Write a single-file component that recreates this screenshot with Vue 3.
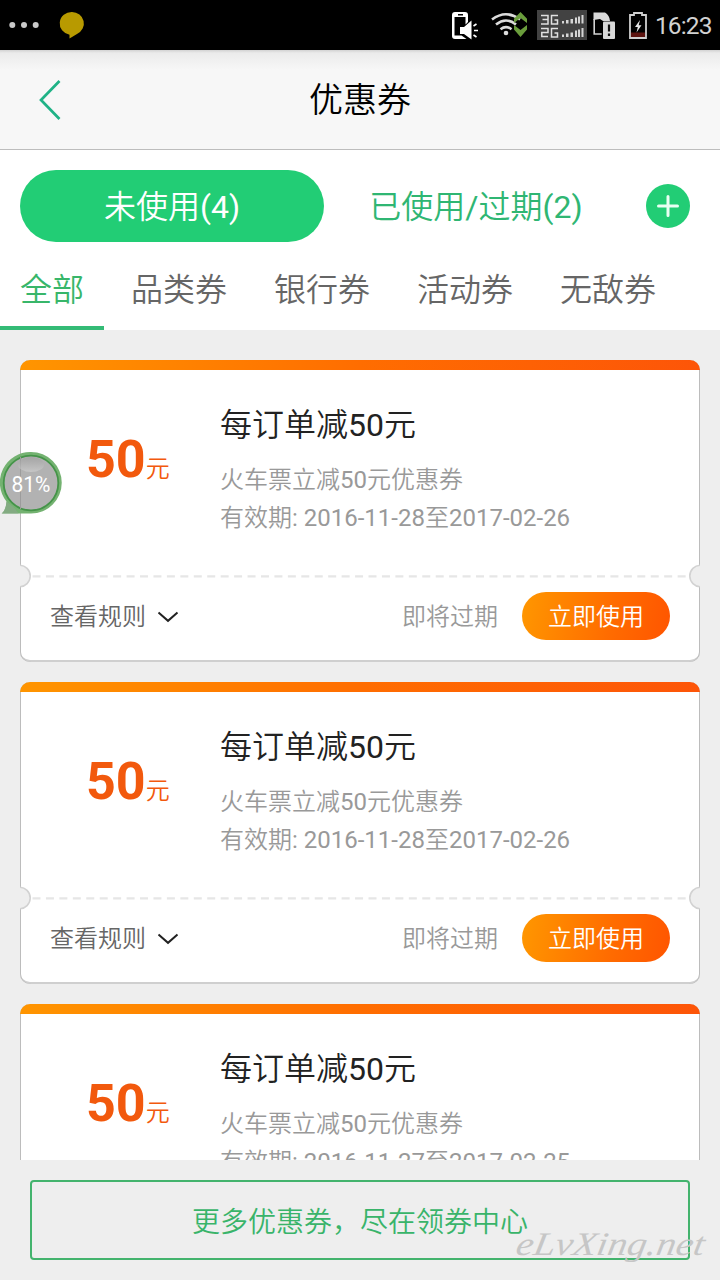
<script setup>
const filters = ['全部', '品类券', '银行券', '活动券', '无敌券']

const coupons = [
  { amount: 50, title: '每订单减50元', desc: '火车票立减50元优惠券', valid: '有效期: 2016-11-28至2017-02-26', note: '即将过期' },
  { amount: 50, title: '每订单减50元', desc: '火车票立减50元优惠券', valid: '有效期: 2016-11-28至2017-02-26', note: '即将过期' },
  { amount: 50, title: '每订单减50元', desc: '火车票立减50元优惠券', valid: '有效期: 2016-11-27至2017-02-25', note: '即将过期' }
]

// Splits a label so that Latin runs can carry their own weight.
const runs = (s) => s.split(/([\x20-\x7e]+)/).filter(Boolean).map((t) => ({ t, latin: /^[\x20-\x7e]/.test(t) }))
</script>

<template>
  <div class="screen">
    <div class="status">
      <svg class="status-left" width="90" height="50" viewBox="0 0 90 50">
        <g fill="#c9c9c9">
          <circle cx="12.3" cy="25" r="3" /><circle cx="24" cy="25" r="3" /><circle cx="35.7" cy="25" r="3" />
        </g>
        <path fill="#b89a00" d="M72 12a12 11.5 0 0 1 5 21.900l-7.500 4.600v-3.700A12 11.500 0 0 1 72 12z" />
      </svg>
      <svg class="status-icons" width="212" height="50" viewBox="440 0 212 50">
        <path fill="#fff" fill-rule="evenodd" d="M455 12h10a3 3 0 0 1 3 3v7l-2.500 2.500V17h-11v18.500h7l5 3.500H455a3 3 0 0 1-3-3V15a3 3 0 0 1 3-3zm3 2v1.500h5V14z" />
        <path fill="#fff" d="M460 27h4l7.500-6.500v19L464 34h-4z" />
        <path d="M473.500 26l3-2M474 30.500h4M473.500 35l3 2" stroke="#fff" stroke-width="1.700" fill="none" />
        <g fill="none" stroke="#dcdcdc" stroke-width="2.600">
          <path d="M492 19.500Q506 9 520 19.500" /><path d="M496 24.500Q506 16.500 516 24.500" /><path d="M500.500 29.200Q506 25 511.500 29.200" />
        </g>
        <circle cx="506" cy="33" r="2.300" fill="#dcdcdc" />
        <path fill="#6a9d3c" d="M520.500 12l6.500 6.700v4.300l-6.500-5-6.500 5v-4.300zM514 25l6.500 5 6.500-5v4.500l-6.500 7.500-6.500-7.500z" />
        <rect x="537" y="10" width="50" height="30" fill="#424242" />
        <g fill="none" stroke="#e0e0e0" stroke-width="1.500">
          <path d="M541 15.500h7v8.500h-7M542.500 19.500h5.500M558 15.500h-6.500V24h6v-4h-3" />
          <path d="M541 28.500h7v4h-6.200v4H548M558 28.500h-6.500V37h6v-4h-3" />
        </g>
        <g fill="#d5d5d5">
          <path d="M562 21h2v2.500h-2zM566 20h2.500v3.500H566zM570.500 19h2.500v4.500h-2.500zM575 17.500h2v6h-2zM578 16.500h2v7h-2zM581.500 15h2v8.500h-2z" />
          <path d="M562 34.500h2V37h-2zM566 33.500h2.500V37H566zM570.500 32.500h2.500V37h-2.500zM575 30.500h2V37h-2zM578 29.500h2V37h-2zM581.500 28h2v9h-2z" />
        </g>
        <path d="M594.200 19v15h7.500" fill="none" stroke="#d2d2d2" stroke-width="1.600" />
        <path d="M593.500 12.500h11.500q4.500 2.500 5 8.500H603l-3-2-6.500 1z" fill="#d8d8d8" />
        <rect x="603" y="21.500" width="12" height="17.500" rx="1" fill="#d8d8d8" />
        <path d="M609 24.500v7M609 33.500v2.500" stroke="#111" stroke-width="2.200" />
        <path d="M630 15h4v-2h8v2h4v23h-16z" fill="none" stroke="#d0d0d0" stroke-width="1.800" />
        <rect x="631" y="32.500" width="14" height="4.500" fill="#5d1410" />
        <path d="M640 20l-5 7h2.800l-1.300 5.500 5-7.300h-2.800z" fill="#e8e8e8" />
      </svg>
      <span class="clock">16:23</span>
    </div>

    <header class="header">
      <svg class="back" width="24" height="42" viewBox="0 0 24 42">
        <path d="M21.500 2L3 21l18.500 19" fill="none" stroke="#1fb286" stroke-width="2.700" />
      </svg>
      <h1>优惠券</h1>
    </header>

    <section class="tabs">
      <div class="states">
        <div class="state on"><span v-for="(r, k) in runs('未使用(4)')" :key="k" :class="{ latin: r.latin }">{{ r.t }}</span></div>
        <div class="state"><span v-for="(r, k) in runs('已使用/过期(2)')" :key="k" :class="{ latin: r.latin }">{{ r.t }}</span></div>
        <svg class="add" width="44" height="44" viewBox="0 0 44 44">
          <circle cx="22" cy="22" r="22" fill="#22cd75" />
          <path d="M22 12.500v19M12.500 22h19" stroke="#e9fff3" stroke-width="3" stroke-linecap="round" />
        </svg>
      </div>
      <nav class="filters">
        <div v-for="(f, i) in filters" :key="f" class="filter" :class="{ active: i === 0 }">{{ f }}</div>
      </nav>
    </section>

    <main class="list">
      <article v-for="(c, i) in coupons" :key="i" class="card">
        <div class="stripe"></div>
        <div class="info">
          <div class="amount"><b>{{ c.amount }}</b><span>元</span></div>
          <div class="detail">
            <h2><span v-for="(r, k) in runs(c.title)" :key="k" :class="{ latin: r.latin }">{{ r.t }}</span></h2>
            <p><span v-for="(r, k) in runs(c.desc)" :key="k" :class="{ latin: r.latin }">{{ r.t }}</span></p>
            <p class="valid"><span v-for="(r, k) in runs(c.valid)" :key="k" :class="{ latin: r.latin }">{{ r.t }}</span></p>
          </div>
        </div>
        <svg class="tear" width="680" height="24" viewBox="0 0 680 24">
          <path d="M12.500 12.300H668" stroke="#e6e6e6" stroke-width="2.200" stroke-dasharray="8 5.440" />
          <circle cx="-0.500" cy="12" r="10.700" fill="#eee" stroke="#d2d2d2" stroke-width="1.600" />
          <circle cx="680.500" cy="12" r="10.700" fill="#eee" stroke="#d2d2d2" stroke-width="1.600" />
        </svg>
        <div class="actions">
          <span class="rules">查看规则</span>
          <svg class="chevron" width="22" height="12" viewBox="0 0 22 12">
            <path d="M1.500 1.500L11 9.800l9.500-8.300" fill="none" stroke="#222" stroke-width="2" />
          </svg>
          <span class="note">{{ c.note }}</span>
          <button class="use">立即使用</button>
        </div>
      </article>
    </main>

    <footer class="footer">
      <button class="more">更多优惠券，尽在领券中心</button>
    </footer>

    <svg class="bubble" width="64" height="66" viewBox="0 0 64 66">
      <defs>
        <linearGradient id="gloss" x1="0" y1="0" x2="0" y2="1">
          <stop offset="0" stop-color="#999" stop-opacity="0.500" /><stop offset="1" stop-color="#d4d4d4" stop-opacity="0.600" />
        </linearGradient>
      </defs>
      <path d="M31 2a30.500 30.500 0 0 1 0 61.500H2q4-4 4.500-12A30.500 30.500 0 0 1 31 2z" fill="#74b271" />
      <path d="M1.500 63.500q4.500-3 5-12l8 6.500 4 5.500z" fill="#8aa88a" opacity="0.700" />
      <circle cx="31" cy="33" r="27.300" fill="#b2b2b2" stroke="#459449" stroke-width="1.800" />
      <path d="M20.500 7v52" stroke="#9c9c9c" stroke-width="1" />
      <ellipse cx="31" cy="14.500" rx="13" ry="7.500" fill="url(#gloss)" />
      <text x="31" y="42" text-anchor="middle" font-size="22" textLength="39" lengthAdjust="spacingAndGlyphs" fill="#fff">81%</text>
    </svg>

    <svg class="watermark" width="204" height="50" viewBox="0 0 204 50">
      <text x="2" y="29" textLength="188" lengthAdjust="spacingAndGlyphs" transform="skewX(-10) translate(4 0)">eLvXing.net</text>
    </svg>
  </div>
</template>

<style>
body { margin: 0; overflow: hidden; }
</style>

<style scoped>
.screen {
  position: relative; display: flex; flex-direction: column; width: 720px; height: 1280px; overflow: hidden;
  background: #eee; font-family: Roboto, "Noto Sans CJK SC DemiLight", "Noto Sans CJK SC", sans-serif; font-weight: 350;
}
.latin { font-weight: 400; }
.status { display: flex; height: 50px; flex: none; background: #000; }
.status-icons { margin-left: 350px; }
.clock { margin-left: 3px; line-height: 51px; font-size: 24.500px; font-weight: 400; letter-spacing: -0.900px; color: #d2d2d2; white-space: nowrap; }
.header {
  display: flex; align-items: center; flex: none; box-sizing: border-box; height: 100px; padding: 0 38px;
  border-bottom: 1px solid #bdbdbd; background: linear-gradient(#d2d2d2 0, #ebebeb 3px, #f0f0f0 10px, #f7f7f7 20px);
}
.header h1 { flex: 1; margin: 0 24px 0 0; text-align: center; font-size: 34px; line-height: 50px; font-weight: 400; color: #000; }
.tabs { display: flex; flex-direction: column; flex: none; height: 180px; background: #fff; }
.states { display: flex; align-items: center; padding: 20px 30px 0 20px; }
.state { width: 304px; border-radius: 36px; text-align: center; font-size: 32px; line-height: 74px; height: 72px; color: #2fb673; }
.state.on { background: #22cd75; color: #fff; }
.add { margin-left: 18px; }
.filters { display: flex; gap: 7px; margin-top: auto; }
.filter { padding: 0 20px; height: 66px; line-height: 53px; box-sizing: border-box; font-size: 32px; color: #666; }
.filter.active { border-bottom: 4px solid #34bb76; color: #38b66a; }
.list { display: flex; flex: 1; min-height: 0; flex-direction: column; gap: 20px; overflow: hidden; padding: 30px 20px 0; }
.card {
  display: flex; flex: none; flex-direction: column; height: 302px; box-sizing: border-box; overflow: hidden;
  border-radius: 10px; background: #fff; box-shadow: inset 1px 0 #bcbcbc, inset -1px 0 #bcbcbc, inset 0 -2px #cfcfcf;
}
.stripe { flex: none; height: 10px; background: linear-gradient(90deg, #ff9500, #ff6d00 50%, #fd5508); }
.info { display: flex; height: 194px; }
.amount { width: 134px; padding: 55px 0 0 66px; line-height: 70px; white-space: nowrap; color: #f2590d; }
.amount b { font-size: 52px; font-weight: 700; }
.amount span { font-size: 24px; }
.detail { padding-top: 33px; }
.detail h2 { margin: 0 0 13px; font-size: 32px; line-height: 45px; font-weight: inherit; color: #222; }
.detail p { margin: 0; font-size: 24px; line-height: 38px; color: #999; white-space: pre; }
.tear { flex: none; display: block; }
.actions { display: flex; align-items: center; height: 56px; padding: 0 30px; font-size: 24px; line-height: 48px; }
.rules, .note { padding-top: 2px; }
.rules { color: #666; }
.chevron { margin: 2px 0 0 11px; }
.note { margin-left: auto; color: #999; }
.use {
  width: 148px; height: 48px; margin-left: 24px; padding: 2px 0 0; border: 0; border-radius: 24px;
  font: inherit; line-height: 46px; color: #fff; background: linear-gradient(100deg, #ff9700, #ff6c00 60%, #ff5500);
}
.footer { flex: none; box-sizing: border-box; height: 120px; padding: 20px 30px; }
.more {
  display: block; width: 660px; height: 80px; box-sizing: border-box; padding: 0 0 1px; border: 2px solid #43b36d;
  border-radius: 4px; background: transparent; font: inherit; font-size: 28px; color: #39b46a;
}
.bubble { position: absolute; left: 0; top: 450px; font-weight: 400; }
.watermark { position: absolute; left: 514px; top: 1226px; overflow: visible; }
.watermark text { font-family: "Liberation Serif", serif; font-style: italic; font-size: 33px; fill: #c6c6c6; }
</style>
